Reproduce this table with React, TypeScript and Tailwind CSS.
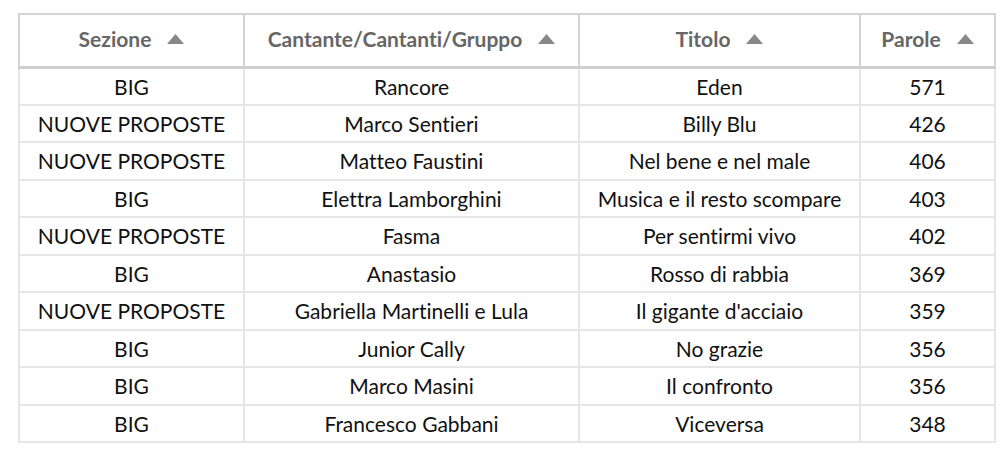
const rows = [
  ["BIG", "Rancore", "Eden", "571"],
  ["NUOVE PROPOSTE", "Marco Sentieri", "Billy Blu", "426"],
  ["NUOVE PROPOSTE", "Matteo Faustini", "Nel bene e nel male", "406"],
  ["BIG", "Elettra Lamborghini", "Musica e il resto scompare", "403"],
  ["NUOVE PROPOSTE", "Fasma", "Per sentirmi vivo", "402"],
  ["BIG", "Anastasio", "Rosso di rabbia", "369"],
  ["NUOVE PROPOSTE", "Gabriella Martinelli e Lula", "Il gigante d'acciaio", "359"],
  ["BIG", "Junior Cally", "No grazie", "356"],
  ["BIG", "Marco Masini", "Il confronto", "356"],
  ["BIG", "Francesco Gabbani", "Viceversa", "348"],
];

const headers = [
  { label: "Sezione", w: "w-[225px]" },
  { label: "Cantante/Cantanti/Gruppo", w: "w-[335px]" },
  { label: "Titolo", w: "w-[281px]" },
  { label: "Parole", w: "w-[135px]" },
];

function SortArrow() {
  return (
    <svg width="17" height="10" viewBox="0 0 17 10" className="shrink-0">
      <path d="M8.5 0 L17 10 L0 10 Z" fill="#888" />
    </svg>
  );
}

export default function App() {
  return (
    <div className="w-[1002px] h-[458px] bg-white pt-[13px] pl-[18px] font-['Lato','Liberation_Sans',sans-serif] [font-variant-ligatures:none]">
      <table className="border-collapse border-2 border-[#dcdcdc] w-[976px] table-fixed">
        <thead>
          <tr className="h-[53px]">
            {headers.map((h) => (
              <th
                key={h.label}
                className={`${h.w} border-2 border-b-[3px] border-[#d4d4d4] border-b-[#cfcfcf] p-0 font-bold text-[21px] text-[#666666]`}
              >
                <div className="flex items-center justify-center gap-4 pb-[3px]">
                  <span>{h.label}</span>
                  <SortArrow />
                </div>
              </th>
            ))}
          </tr>
        </thead>
        <tbody>
          {rows.map((r, i) => (
            <tr key={i} className="h-[37.5px]">
              {r.map((c, j) => (
                <td
                  key={j}
                  className="border-2 border-[#e6e6e6] p-0 text-center text-[21px] leading-none text-[#111111]"
                >
                  {c}
                </td>
              ))}
            </tr>
          ))}
        </tbody>
      </table>
    </div>
  );
}
